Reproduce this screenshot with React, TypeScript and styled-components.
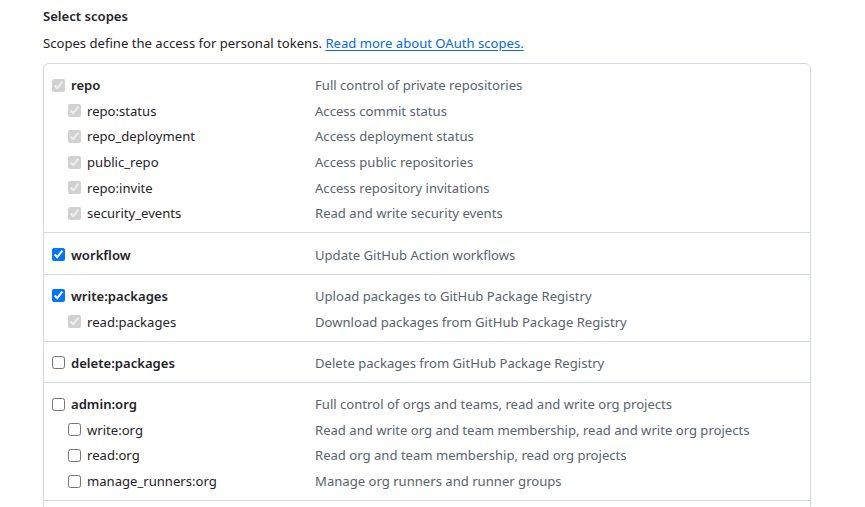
import React from 'react';
import styled, { createGlobalStyle } from 'styled-components';

const GlobalStyle = createGlobalStyle`
  body {
    margin: 0;
    background: #ffffff;
    font-family: "Noto Sans", "Liberation Sans", sans-serif;
    font-size: 13.1px;
    color: #1f2328;
  }
`;

const Page = styled.div`
  padding: 6px 0 0 43px;
  width: 768px;
`;

const Heading = styled.h3`
  margin: 0;
  font-size: 13.1px;
  font-weight: 600;
  line-height: 21px;
`;

const Note = styled.p`
  margin: 6px 0 9px;
  line-height: 21px;
`;

const Link = styled.a`
  color: #0969da;
  text-decoration: underline;
  text-underline-offset: 2px;
`;

const ScopeBox = styled.div`
  border: 1px solid #d1d9e0;
  border-radius: 6px;
`;

const Group = styled.div`
  padding: 8.5px 0 6.25px;
  & + & {
    border-top: 1px solid #d1d9e0;
  }
`;

const Row = styled.label`
  display: grid;
  grid-template-columns: 271px 1fr;
  align-items: center;
  height: 25.6px;
`;

const Name = styled.span<{ $sub?: boolean }>`
  display: flex;
  align-items: center;
  gap: 6px;
  padding-left: ${({ $sub }) => ($sub ? 24 : 8)}px;
  font-weight: ${({ $sub }) => ($sub ? 400 : 600)};
  color: #1f2328;
`;

const Box = styled.input`
  width: 13px;
  height: 13px;
  margin: 0;
`;

const Desc = styled.span`
  color: #59636e;
`;

type Scope = { name: string; desc: string; checked?: boolean; disabled?: boolean };
type ScopeGroup = { head: Scope; children: Scope[] };

const groups: ScopeGroup[] = [
  {
    head: { name: 'repo', desc: 'Full control of private repositories', checked: true, disabled: true },
    children: [
      { name: 'repo:status', desc: 'Access commit status', checked: true, disabled: true },
      { name: 'repo_deployment', desc: 'Access deployment status', checked: true, disabled: true },
      { name: 'public_repo', desc: 'Access public repositories', checked: true, disabled: true },
      { name: 'repo:invite', desc: 'Access repository invitations', checked: true, disabled: true },
      { name: 'security_events', desc: 'Read and write security events', checked: true, disabled: true },
    ],
  },
  {
    head: { name: 'workflow', desc: 'Update GitHub Action workflows', checked: true },
    children: [],
  },
  {
    head: { name: 'write:packages', desc: 'Upload packages to GitHub Package Registry', checked: true },
    children: [
      { name: 'read:packages', desc: 'Download packages from GitHub Package Registry', checked: true, disabled: true },
    ],
  },
  {
    head: { name: 'delete:packages', desc: 'Delete packages from GitHub Package Registry' },
    children: [],
  },
  {
    head: { name: 'admin:org', desc: 'Full control of orgs and teams, read and write org projects' },
    children: [
      { name: 'write:org', desc: 'Read and write org and team membership, read and write org projects' },
      { name: 'read:org', desc: 'Read org and team membership, read org projects' },
      { name: 'manage_runners:org', desc: 'Manage org runners and runner groups' },
    ],
  },
  {
    head: { name: 'admin:public_key', desc: 'Full control of user public keys' },
    children: [],
  },
];

const ScopeRow = ({ scope, sub }: { scope: Scope; sub?: boolean }) => (
  <Row>
    <Name $sub={sub}>
      <Box type="checkbox" defaultChecked={scope.checked} disabled={scope.disabled} />
      {scope.name}
    </Name>
    <Desc>{scope.desc}</Desc>
  </Row>
);

export default function App() {
  return (
    <>
      <GlobalStyle />
      <Page>
        <Heading>Select scopes</Heading>
        <Note>
          Scopes define the access for personal tokens. <Link href="#">Read more about OAuth scopes.</Link>
        </Note>
        <ScopeBox>
          {groups.map((g) => (
            <Group key={g.head.name}>
              <ScopeRow scope={g.head} />
              {g.children.map((c) => (
                <ScopeRow key={c.name} scope={c} sub />
              ))}
            </Group>
          ))}
        </ScopeBox>
      </Page>
    </>
  );
}
